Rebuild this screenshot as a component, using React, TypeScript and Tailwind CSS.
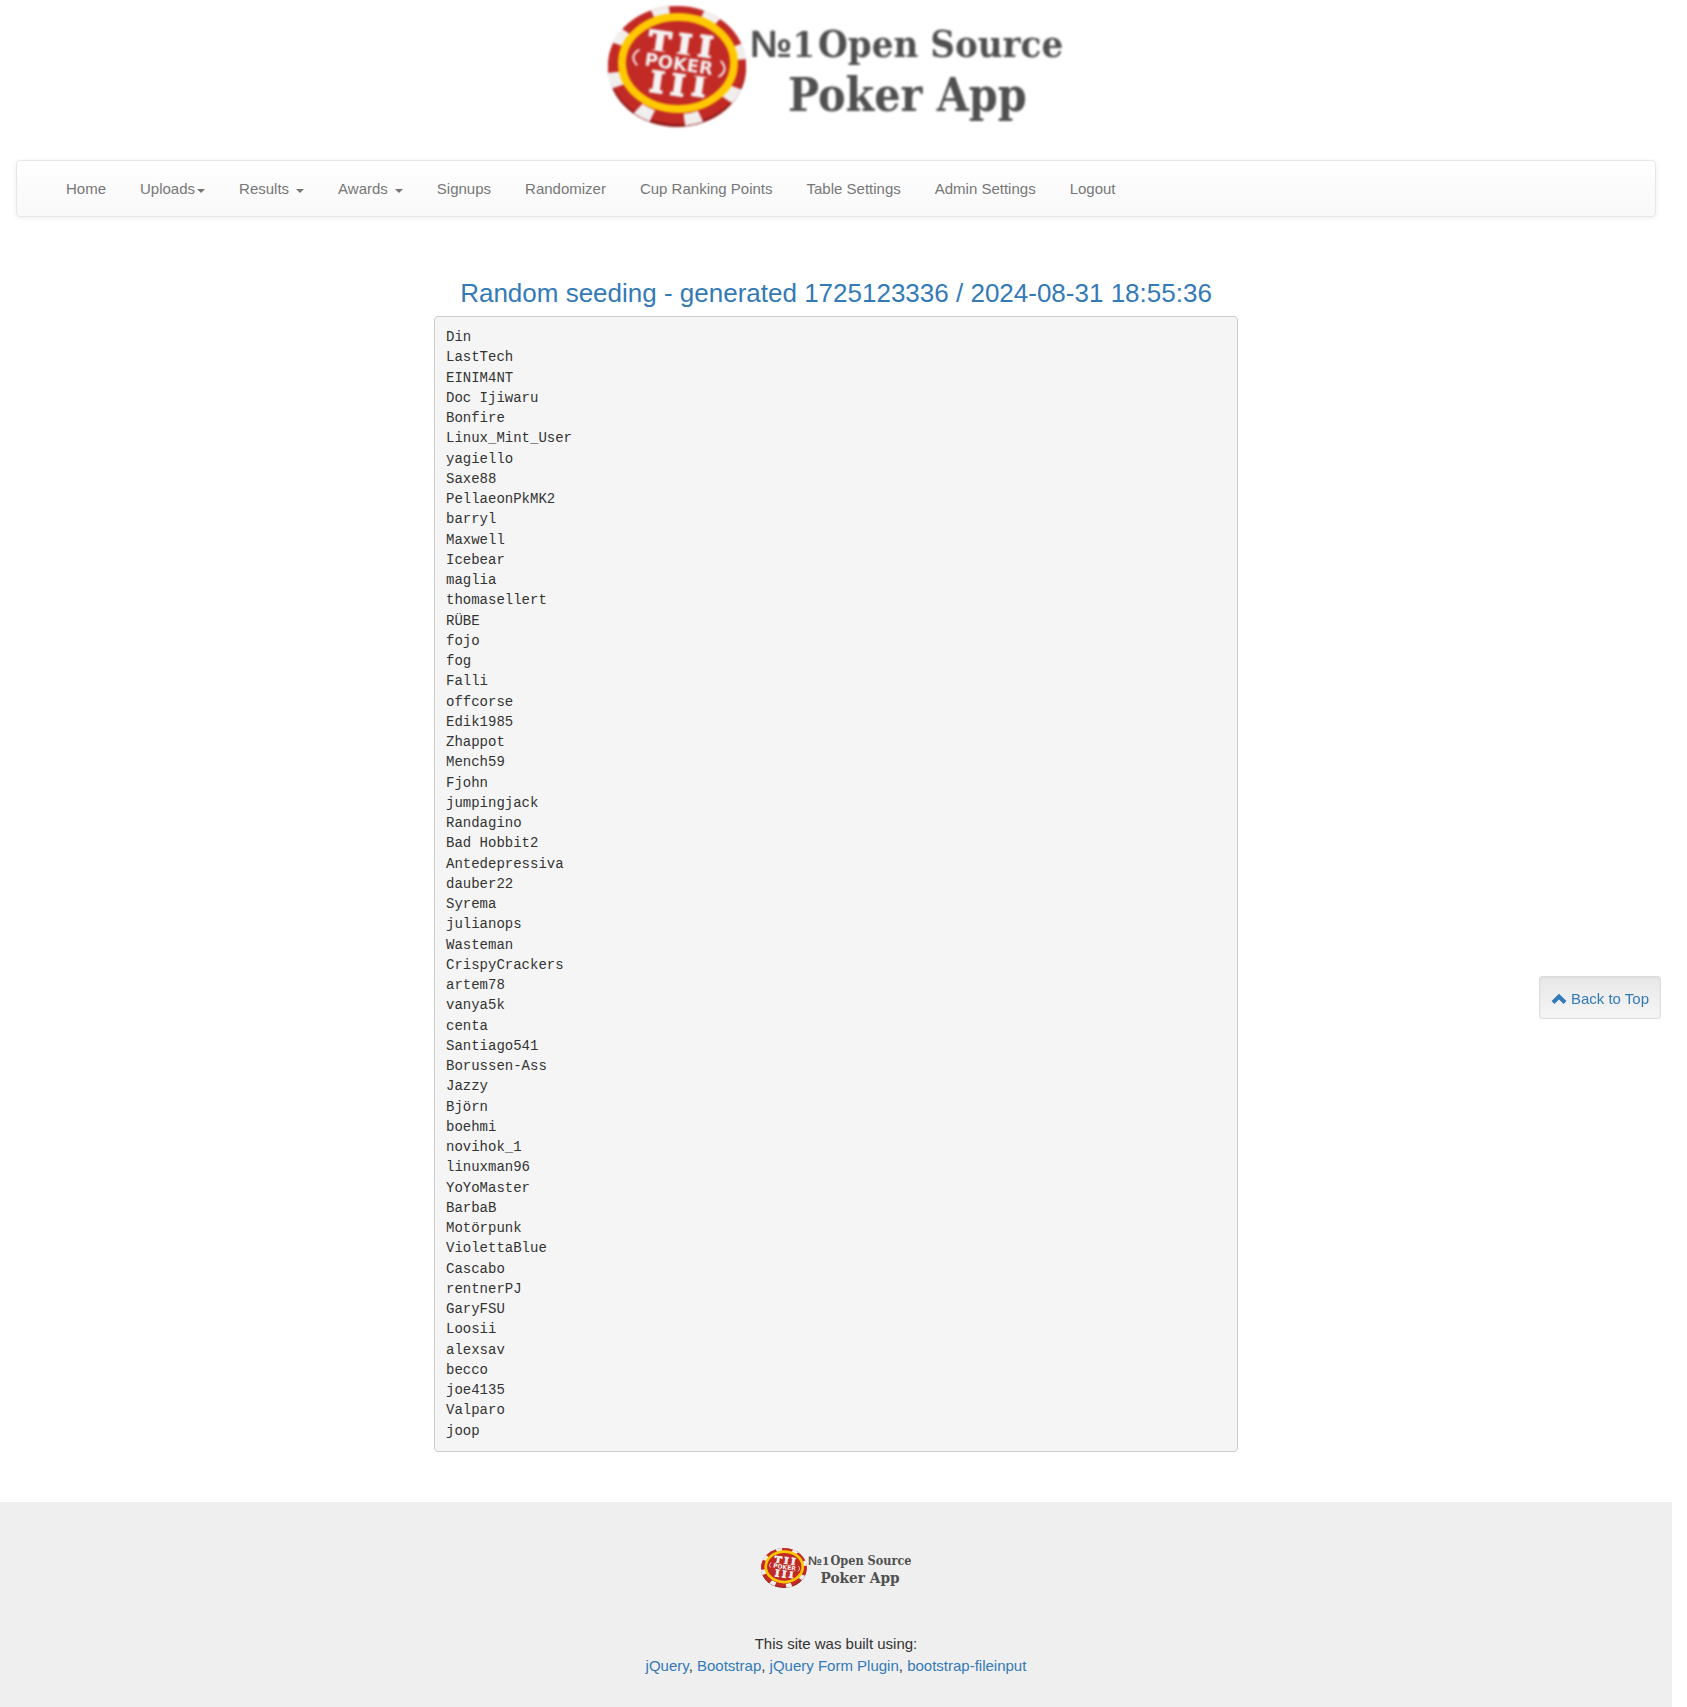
import React from "react";

const players = [
  "Din", "LastTech", "EINIM4NT", "Doc Ijiwaru", "Bonfire", "Linux_Mint_User", "yagiello",
  "Saxe88", "PellaeonPkMK2", "barryl", "Maxwell", "Icebear", "maglia", "thomasellert",
  "RÜBE", "fojo", "fog", "Falli", "offcorse", "Edik1985", "Zhappot", "Mench59", "Fjohn",
  "jumpingjack", "Randagino", "Bad Hobbit2", "Antedepressiva", "dauber22", "Syrema",
  "julianops", "Wasteman", "CrispyCrackers", "artem78", "vanya5k", "centa", "Santiago541",
  "Borussen-Ass", "Jazzy", "Björn", "boehmi", "novihok_1", "linuxman96", "YoYoMaster",
  "BarbaB", "Motörpunk", "ViolettaBlue", "Cascabo", "rentnerPJ", "GaryFSU", "Loosii",
  "alexsav", "becco", "joe4135", "Valparo", "joop",
];

type NavItem = { label: string; menu?: "tight" | "spaced" };

const navItems: NavItem[] = [
  { label: "Home" },
  { label: "Uploads", menu: "tight" },
  { label: "Results", menu: "spaced" },
  { label: "Awards", menu: "spaced" },
  { label: "Signups" },
  { label: "Randomizer" },
  { label: "Cup Ranking Points" },
  { label: "Table Settings" },
  { label: "Admin Settings" },
  { label: "Logout" },
];

const credits = ["jQuery", "Bootstrap", "jQuery Form Plugin", "bootstrap-fileinput"];

function Logo({ className }: { className: string }) {
  const serif = "'DejaVu Serif Condensed', 'DejaVu Serif', serif";
  return (
    <svg viewBox="0 0 458 130" className={className} role="img" aria-label="№1 Open Source Poker App">
      <ellipse cx="70" cy="68" rx="69" ry="59" fill="#8f1d1a" />
      <ellipse cx="70" cy="65" rx="69" ry="59" fill="#c22a26" />
      <g transform="translate(70 66) scale(1 0.86)">
        <circle
          r="63"
          fill="none"
          stroke="#f1eeee"
          strokeWidth="14"
          pathLength={80}
          strokeDasharray="3.4 6.6"
          transform="rotate(-67)"
        />
      </g>
      <ellipse cx="71" cy="63" rx="56" ry="46" fill="#c22a26" stroke="#ffc800" strokeWidth="8" />
      <g transform="rotate(8 71 63)" fill="#f4f2f2" fontWeight="700" textAnchor="middle">
        <g fontSize="30" stroke="#f4f2f2" strokeWidth="2" fontFamily="'DejaVu Serif', serif">
          <text x="50" y="56">T</text>
          <text x="75" y="55">I</text>
          <text x="96" y="54">I</text>
          <text x="53" y="95">I</text>
          <text x="74" y="95">I</text>
          <text x="95" y="93">I</text>
        </g>
        <rect x="24" y="54" width="96" height="19" rx="9" fill="#c22a26" />
        <path d="M31 55Q21 63 31 71M113 55Q123 63 113 71" fill="none" stroke="#f4f2f2" strokeWidth="2" />
        <text x="72" y="70" fontFamily="'DejaVu Sans', sans-serif" fontSize="18">POKER</text>
      </g>
      <g fill="#505050" fontFamily={serif} fontWeight="700">
        <text x="143" y="57" fontSize="38">
          <tspan fontFamily="'Liberation Sans', Arial, sans-serif">№</tspan>
          <tspan fontSize="36">1</tspan>
        </text>
        <text x="211" y="57" fontSize="38">Open Source</text>
        <text x="181" y="111" fontSize="46">Poker App</text>
      </g>
    </svg>
  );
}

function Navbar() {
  return (
    <nav className="mx-4 rounded-[4px] border border-[#e7e7e7] bg-linear-to-b from-white to-[#f8f8f8] shadow-[0_1px_5px_rgba(0,0,0,0.075)]">
      <ul className="flex flex-wrap px-8">
        {navItems.map((item) => (
          <li key={item.label}>
            {item.menu ? (
              <button type="button" className="flex cursor-pointer items-center px-[17px] pt-[17px] pb-4 text-[#777777]">
                {item.label}
                <span
                  className={
                    item.menu === "spaced"
                      ? "mt-1 ml-[7px] border-x-4 border-t-4 border-x-transparent border-t-[#777777]"
                      : "mt-1 ml-[2px] border-x-4 border-t-4 border-x-transparent border-t-[#777777]"
                  }
                />
              </button>
            ) : (
              <a href="#" className="block px-[17px] pt-[17px] pb-4 text-[#777777]">
                {item.label}
              </a>
            )}
          </li>
        ))}
      </ul>
    </nav>
  );
}

export default function App() {
  return (
    <div className="mr-[15px] bg-white font-['Liberation_Sans',Arial,sans-serif] text-[15px] leading-[22px] text-[#333333]">
      <header>
        <a href="#" className="mb-[30px] flex justify-center">
          <Logo className="h-[130px] w-[458px] blur-[1px]" />
        </a>
        <Navbar />
      </header>

      <main className="mx-auto w-1/2 px-4 pt-[61px] pb-[50px]">
        <h3 className="mb-2 text-center text-[26px] leading-[30px] whitespace-nowrap text-[#337ab7]">
          <a href="#">Random seeding - generated 1725123336 / 2024-08-31 18:55:36</a>
        </h3>
        <pre className="rounded-[4px] border border-[#cccccc] bg-[#f5f5f5] px-[11px] py-[10px] font-['Liberation_Mono',monospace] text-[14px] leading-[1.447] text-[#333333]">
          {players.join("\n")}
        </pre>
      </main>

      <footer className="flex flex-col items-center bg-[#efefef] pt-11 pb-[30px] text-center">
        <a href="#">
          <Logo className="h-[43px] w-[153px]" />
        </a>
        <p className="mt-11">
          This site was built using:
          <br />
          {credits.map((name, i) => (
            <React.Fragment key={name}>
              {i > 0 && ", "}
              <a href="#" className="text-[#337ab7]">{name}</a>
            </React.Fragment>
          ))}
        </p>
      </footer>

      <a
        href="#"
        className="fixed top-[976px] right-[26px] flex items-center gap-1 rounded-[3px] border border-[#dcdcdc] bg-linear-to-b from-[#e8e8e8] to-[#f5f5f5] px-[11px] pt-[11px] pb-2 text-[#337ab7] shadow-[inset_0_1px_3px_rgba(0,0,0,0.05)]"
      >
        <svg viewBox="0 0 16 16" className="size-4" aria-hidden="true">
          <path d="M2 11.500 8 5.500l6 6" fill="none" stroke="currentColor" strokeWidth="4" />
        </svg>
        Back to Top
      </a>
    </div>
  );
}
